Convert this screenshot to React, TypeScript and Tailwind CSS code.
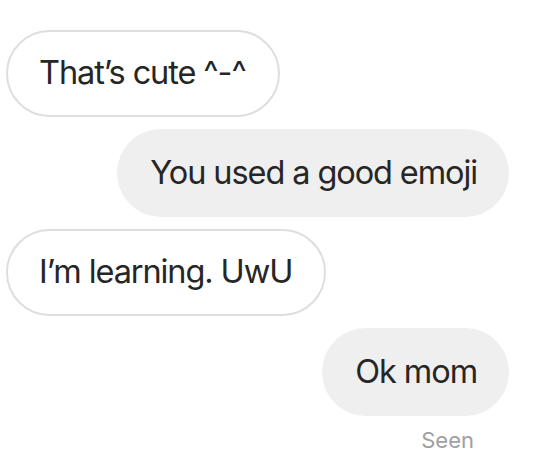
import React from 'react';

type Msg = { text: string; mine: boolean };

const messages: Msg[] = [
  { text: 'That\u2019s cute ^-^', mine: false },
  { text: 'You used a good emoji', mine: true },
  { text: 'I\u2019m learning. UwU', mine: false },
  { text: 'Ok mom', mine: true },
];

const Bubble = ({ text, mine }: Msg) => (
  <div className={mine ? 'flex justify-end' : 'flex justify-start'}>
    <div
      className={
        mine
          ? 'h-[88px] flex items-center pl-[33px] pr-[32px] rounded-full bg-[#efefef] text-[#262626]'
          : 'h-[87px] flex items-center pl-[31px] pr-[32px] rounded-full border-2 border-[#dedede] bg-white text-[#262626]'
      }
    >
      <span className="text-[32.5px] leading-none tracking-[-1.1px] whitespace-nowrap">{text}</span>
    </div>
  </div>
);

export default function App() {
  return (
    <div
      className="w-[533px] h-[470px] bg-white overflow-hidden"
      style={{ fontFamily: 'Inter, "Liberation Sans", sans-serif' }}
    >
      <div className="flex flex-col gap-[12px] pt-[30px] pl-[6px] pr-[24px]">
        {messages.map((m, i) => (
          <Bubble key={i} {...m} />
        ))}
        <div className="flex justify-end pr-[35px] mt-[1px]">
          <span className="text-[22px] text-[#a0a0a0] leading-none">Seen</span>
        </div>
      </div>
    </div>
  );
}
